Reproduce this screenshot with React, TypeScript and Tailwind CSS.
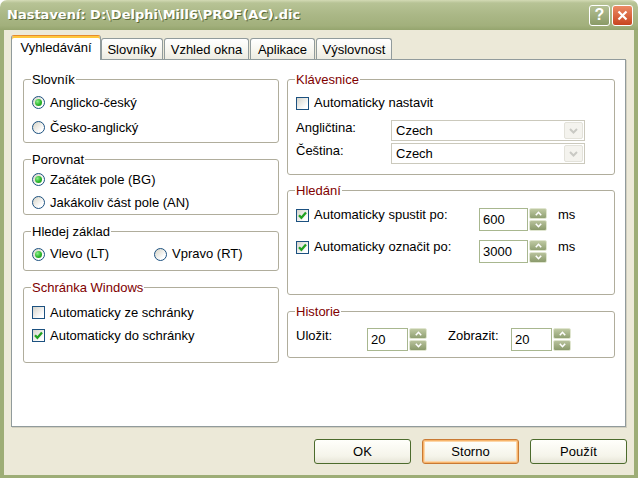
import type { ReactNode } from 'react';

type BoxProps = { checked?: boolean; label: string; className?: string };

const Radio = ({ checked, label, className = '' }: BoxProps) => (
    <div className={`flex items-center ${className}`}>
        <span className="w-[13px] h-[13px] shrink-0 rounded-full border border-[#1c5180] bg-[linear-gradient(135deg,#d6d3c6,#ffffff_75%)] flex items-center justify-center">
            {checked && (
                <span className="w-[7px] h-[7px] rounded-full bg-[radial-gradient(circle_at_35%_35%,#8ef08e,#2bb52b_55%,#168a16)]" />
            )}
        </span>
        <span className="ml-[5px] leading-[16px]">{label}</span>
    </div>
);

const Check = ({ checked, label, className = '' }: BoxProps) => (
    <div className={`flex items-center ${className}`}>
        <span className="w-[13px] h-[13px] shrink-0 border border-[#1c5180] bg-[linear-gradient(135deg,#d4d3cb,#ffffff_80%)] flex items-center justify-center">
            {checked && (
                <svg width="9" height="9" viewBox="0 0 9 9">
                    <path d="M1 4.2 L3.4 6.8 L8 1.6" stroke="#21a121" strokeWidth="2.3" fill="none" />
                </svg>
            )}
        </span>
        <span className="ml-[5px] leading-[16px]">{label}</span>
    </div>
);

// group box, title sits on the top border
const Group = ({ title, red, className, children }: { title: string; red?: boolean; className: string; children: ReactNode }) => (
    <fieldset className={`border border-[#b0ad9c] rounded-[3px] ${className}`}>
        <legend className={`-ml-px px-px leading-[15px] ${red ? 'text-[#800000]' : 'text-black'}`}>{title}</legend>
        {children}
    </fieldset>
);

const Spin = () => (
    <div className="ml-px w-[18px] h-[23px] flex flex-col gap-px">
        <span className="flex-1 rounded-[2px] border border-[#dfe5cf] bg-[linear-gradient(to_bottom,#bfc9a3,#90a072)] flex items-center justify-center">
            <svg width="7" height="5" viewBox="0 0 7 5">
                <path d="M0.8 4.2 L3.5 1.3 L6.2 4.2" stroke="#ffffff" strokeWidth="1.6" fill="none" />
            </svg>
        </span>
        <span className="flex-1 rounded-[2px] border border-[#dfe5cf] bg-[linear-gradient(to_bottom,#b7c19b,#8a9a6b)] flex items-center justify-center">
            <svg width="7" height="5" viewBox="0 0 7 5">
                <path d="M0.8 0.8 L3.5 3.7 L6.2 0.8" stroke="#ffffff" strokeWidth="1.6" fill="none" />
            </svg>
        </span>
    </div>
);

const Combo = () => (
    <div className="w-[194px] h-[21px] bg-white border border-[#cbc9bc] flex items-center">
        <span className="flex-1 pl-[4px] leading-[16px]">Czech</span>
        <span className="w-[19px] h-[17px] mr-px rounded-[2px] bg-[#f4f3ee] border border-[#e3e2da] flex items-center justify-center">
            <svg width="9" height="6" viewBox="0 0 9 6">
                <path d="M1 1 L4.5 4.5 L8 1" stroke="#c9c9c4" strokeWidth="2" fill="none" />
            </svg>
        </span>
    </div>
);

const Btn = ({ children, def }: { children: ReactNode; def?: boolean }) => (
    <button
        className={`w-[97px] h-[25px] rounded-[3px] border text-[13px] leading-[16px] bg-[linear-gradient(to_bottom,#fffffb,#f5f4ea_70%,#e6e4d6)] ${
            def
                ? 'border-[#c97a34] shadow-[inset_0_0_0_1px_#f7b46b,inset_0_0_0_2px_#fcd6a8]'
                : 'border-[#4c6b2c]'
        }`}
    >
        {children}
    </button>
);

const tabs = ['Slovníky', 'Vzhled okna', 'Aplikace', 'Výslovnost'];
const tabW = ['w-[62px]', 'w-[85px] ml-px', 'w-[65px] ml-px', 'w-[76px] ml-px'];

export default function App() {
    return (
        <div className="w-[638px] h-[478px] flex flex-col font-['Liberation_Sans',Arial,sans-serif] text-[13px] text-black select-none">

            {/* title bar */}
            <div className="h-[30px] shrink-0 flex items-center pl-[7px] pr-[5px] rounded-t-[7px] bg-[linear-gradient(to_bottom,#d3dab5_0%,#b7c395_10%,#aab786_50%,#a2b07c_85%,#95a56e_100%)]">
                <span className="flex-1 text-white font-bold text-[13px] font-['DejaVu_Sans',sans-serif] [text-shadow:1px_1px_0_#5b6a38]">
                    Nastavení: D:\Delphi\Mill6\PROF(AC).dic
                </span>
                <span className="w-[21px] h-[21px] rounded-[3px] border border-white bg-[linear-gradient(to_bottom,#b4c095,#8a9a66)] flex items-center justify-center text-white font-bold text-[16px] leading-none">
                    ?
                </span>
                <span className="ml-[2px] w-[21px] h-[21px] rounded-[3px] border border-white bg-[linear-gradient(to_bottom,#ec8a64,#c8451f)] flex items-center justify-center">
                    <svg width="11" height="11" viewBox="0 0 11 11">
                        <path d="M1.5 1.5 L9.5 9.5 M9.5 1.5 L1.5 9.5" stroke="#ffffff" strokeWidth="2.2" />
                    </svg>
                </span>
            </div>

            {/* window body */}
            <div className="flex-1 flex flex-col border-l-4 border-r-4 border-b-[3px] border-[#9dad76] bg-[#ece9d8] pl-[7px] pt-[5px]">

                {/* tabs */}
                <div className="h-[24px] flex items-end">
                    <div className="relative z-10 w-[90px] h-[25px] -mb-px rounded-t-[3px] border border-b-0 border-[#919b9c] border-t-[#e68b2c] bg-white shadow-[inset_0_2px_0_#ffc73c] flex items-center justify-center">
                        Vyhledávání
                    </div>
                    {tabs.map((t, i) => (
                        <div
                            key={t}
                            className={`${tabW[i]} h-[21px] pt-[2px] rounded-t-[3px] border border-b-0 border-[#919b9c] bg-[linear-gradient(to_bottom,#ffffff,#f6f5ee_60%,#ecebe2)] flex items-center justify-center`}
                        >
                            {t}
                        </div>
                    ))}
                </div>

                {/* tab panel */}
                <div className="w-[615px] h-[368px] border border-[#919b9c] bg-white shadow-[1px_1px_0_#d2cfbf] flex pl-[11px] gap-[8px]">

                    {/* left column */}
                    <div className="w-[256px] flex flex-col">
                        <Group title="Slovník" className="h-[71px] mt-[12px] pl-[8px]">
                            <div className="pt-[3px]">
                                <Radio checked label="Anglicko-český" className="h-[25px]" />
                                <Radio label="Česko-anglický" className="h-[25px]" />
                            </div>
                        </Group>
                        <Group title="Porovnat" className="h-[63px] mt-[9px] pl-[8px]">
                            <div className="pt-[1px]">
                                <Radio checked label="Začátek pole (BG)" className="h-[23px]" />
                                <Radio label="Jakákoliv část pole (AN)" className="h-[23px]" />
                            </div>
                        </Group>
                        <Group title="Hledej základ" className="h-[47px] mt-[9px] pl-[8px]">
                            <div className="pt-[4px] flex">
                                <Radio checked label="Vlevo (LT)" className="h-[22px] w-[122px]" />
                                <Radio label="Vpravo (RT)" className="h-[22px]" />
                            </div>
                        </Group>
                        <Group title="Schránka Windows" red className="h-[83px] mt-[9px] pl-[8px]">
                            <div className="pt-[6px]">
                                <Check label="Automaticky ze schránky" className="h-[23px]" />
                                <Check checked label="Automaticky do schránky" className="h-[23px]" />
                            </div>
                        </Group>
                    </div>

                    {/* right column */}
                    <div className="w-[328px] flex flex-col">
                        <Group title="Klávesnice" red className="h-[103px] mt-[12px] pl-[8px]">
                            <div className="pt-[6px]">
                                <Check label="Automaticky nastavit" className="h-[20px]" />
                                <div className="mt-[7px] flex flex-col gap-[2px]">
                                    <div className="flex items-start">
                                        <span className="w-[95px] leading-[16px]">Angličtina:</span>
                                        <Combo />
                                    </div>
                                    <div className="flex items-start">
                                        <span className="w-[95px] leading-[16px]">Čeština:</span>
                                        <Combo />
                                    </div>
                                </div>
                            </div>
                        </Group>
                        <Group title="Hledání" red className="h-[112px] mt-[8px] pl-[8px]">
                            <div className="pt-[10px] flex flex-col gap-[9px]">
                                {[
                                    ['Automaticky spustit po:', '600'],
                                    ['Automaticky označit po:', '3000'],
                                ].map(([label, val]) => (
                                    <div key={label} className="flex items-start h-[23px]">
                                        <Check checked label={label} className="w-[183px] h-[16px] -mt-px" />
                                        <div className="w-[49px] h-[23px] bg-white border border-[#a8b78f] pl-[3px] pt-[3px] leading-[16px]">{val}</div>
                                        <Spin />
                                        <span className="ml-[11px] leading-[16px] -mt-px">ms</span>
                                    </div>
                                ))}
                            </div>
                        </Group>
                        <Group title="Historie" red className="h-[54px] mt-[9px] pl-[8px]">
                            <div className="pt-[9px] flex items-start">
                                <span className="w-[71px] leading-[16px]">Uložit:</span>
                                <div className="w-[41px] h-[23px] bg-white border border-[#a8b78f] pl-[3px] pt-[3px] leading-[16px]">20</div>
                                <Spin />
                                <span className="ml-[21px] w-[63px] leading-[16px]">Zobrazit:</span>
                                <div className="w-[41px] h-[23px] bg-white border border-[#a8b78f] pl-[3px] pt-[3px] leading-[16px]">20</div>
                                <Spin />
                            </div>
                        </Group>
                    </div>
                </div>

                {/* dialog buttons */}
                <div className="mt-[12px] flex justify-end gap-[11px] pr-[7px]">
                    <Btn>OK</Btn>
                    <Btn def>Storno</Btn>
                    <Btn>Použít</Btn>
                </div>
            </div>
        </div>
    );
}
